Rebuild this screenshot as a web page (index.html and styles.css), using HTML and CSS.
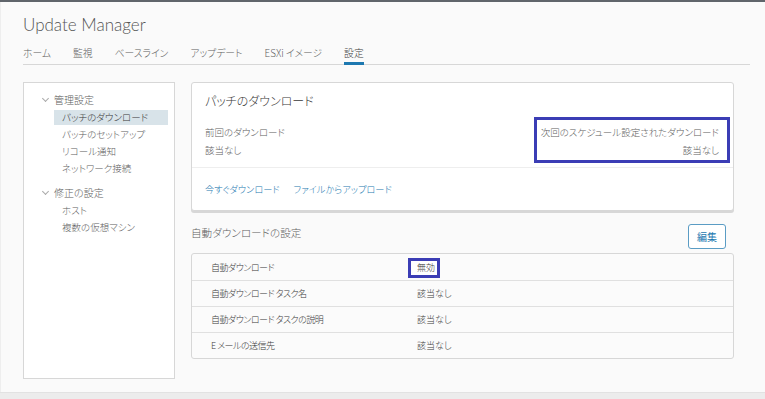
FILE: index.html
```html
<!DOCTYPE html>
<html>
<head>
  <title>Update Manager</title>
  <link rel="stylesheet" href="styles.css">
</head>
<body>
  <div class="topbar"></div>
  <div class="page">
    <h1 class="title">Update Manager</h1>
    <nav class="tabs">
      <a class="tab">ホーム</a>
      <a class="tab">監視</a>
      <a class="tab">ベースライン</a>
      <a class="tab">アップデート</a>
      <a class="tab">ESXi イメージ</a>
      <a class="tab active">設定</a>
    </nav>
    <div class="content">
      <aside class="sidebar">
        <div class="tree-group">
          <div class="tree-head"><span class="chevron"></span>管理設定</div>
          <div class="tree-item selected">パッチのダウンロード</div>
          <div class="tree-item">パッチのセットアップ</div>
          <div class="tree-item">リコール通知</div>
          <div class="tree-item">ネットワーク接続</div>
        </div>
        <div class="tree-group">
          <div class="tree-head"><span class="chevron"></span>修正の設定</div>
          <div class="tree-item">ホスト</div>
          <div class="tree-item">複数の仮想マシン</div>
        </div>
      </aside>
      <main class="main">
        <div class="card">
          <div class="card-block">
            <h2 class="card-title">パッチのダウンロード</h2>
            <div class="details">
              <div class="detail">
                <div>前回のダウンロード</div>
                <div>該当なし</div>
              </div>
              <div class="detail next">
                <div>次回のスケジュール設定されたダウンロード</div>
                <div>該当なし</div>
              </div>
            </div>
          </div>
          <div class="card-footer">
            <a class="link">今すぐダウンロード</a>
            <a class="link">ファイルからアップロード</a>
          </div>
        </div>
        <div class="section-head">
          <h3 class="section-title">自動ダウンロードの設定</h3>
          <button class="btn">編集</button>
        </div>
        <div class="table">
          <div class="row">
            <div class="cell-label">自動ダウンロード</div>
            <div class="cell-value"><span class="marked">無効</span></div>
          </div>
          <div class="row">
            <div class="cell-label">自動ダウンロード タスク名</div>
            <div class="cell-value">該当なし</div>
          </div>
          <div class="row">
            <div class="cell-label">自動ダウンロード タスクの説明</div>
            <div class="cell-value">該当なし</div>
          </div>
          <div class="row">
            <div class="cell-label">E メールの送信先</div>
            <div class="cell-value">該当なし</div>
          </div>
        </div>
      </main>
    </div>
  </div>
  <div class="footer"></div>
</body>
</html>
```

FILE: styles.css
```css
:root {
  --text: #5e5e5e;
  --dark-text: #3a3a3a;
  --blue: #1d78b0;
  --border: #d7d7d7;
  --mark: #3b3db5;
}

* {
  box-sizing: border-box;
}

html, body {
  height: 100%;
}

body {
  margin: 0;
  background: #fafafa;
  color: var(--text);
  font-family: "Noto Sans CJK JP", "Noto Sans", sans-serif;
  font-feature-settings: "palt";
  font-weight: 300;
  font-size: 9.5px;
  line-height: 17px;
  display: flex;
  flex-direction: column;
  overflow: hidden;
}

.topbar {
  height: 2px;
  background: #60656b;
}

.page {
  flex: 1;
  padding: 0 15px 0 22px;
  border-left: 1px solid #eee;
}

.title {
  margin: 0;
  padding-top: 12px;
  font-family: Lato, sans-serif;
  font-weight: 300;
  font-size: 17px;
  line-height: 22px;
  color: #555;
}

.tabs {
  display: flex;
  gap: 22px;
  margin-top: 4px;
  border-bottom: 1px solid var(--border);
}

.tab {
  padding-top: 5px;
  line-height: 17px;
  font-size: 9.8px;
  color: var(--text);
  border-bottom: 3px solid transparent;
  margin-bottom: -1px;
}

.tab.active {
  color: var(--dark-text);
  border-bottom-color: var(--blue);
}

.content {
  display: flex;
  gap: 16px;
  margin-top: 17px;
}

.sidebar {
  width: 152px;
  height: 297px;
  background: #fff;
  border: 1px solid var(--border);
  padding: 8px 6px 0 0;
}

.tree-group + .tree-group {
  margin-top: 8px;
}

.tree-head {
  display: flex;
  align-items: center;
  padding-left: 17px;
  height: 17px;
  font-size: 10px;
}

.chevron {
  width: 5px;
  height: 5px;
  border-right: 1px solid #aaa;
  border-bottom: 1px solid #aaa;
  transform: rotate(45deg);
  margin: -3px 6px 0 2px;
}

.tree-item {
  margin: 2px 0 0 30px;
  padding-left: 8px;
  line-height: 15px;
}

.tree-item.selected {
  background: #d8e3e9;
  color: var(--dark-text);
}

.main {
  flex: 1;
  margin-right: 16px;
}

.card {
  background: #fff;
  border: 1px solid var(--border);
  border-radius: 3px;
  box-shadow: 0 2px 0 0 #d7d7d7;
}

.card-block {
  padding: 9px 14px 8px 13px;
  border-bottom: 1px solid #eee;
}

.card-title {
  margin: 0;
  font-size: 12px;
  font-weight: 300;
  line-height: 18px;
  color: var(--dark-text);
}

.details {
  display: flex;
  justify-content: space-between;
  margin-top: 13px;
  line-height: 18px;
}

.next {
  text-align: right;
  background: #fff;
  border: 3px solid var(--mark);
  padding: 3px 8px 1px 4px;
  margin: -6px -11px -4px -7px;
}

.card-footer {
  display: flex;
  gap: 14px;
  padding: 12px 13px;
  line-height: 18px;
}

.link {
  color: var(--blue);
  font-size: 9.2px;
}

.section-head {
  display: flex;
  justify-content: space-between;
  align-items: flex-start;
  margin-top: 13px;
  padding-right: 8px;
}

.section-title {
  margin: 0;
  font-size: 10.6px;
  font-weight: 300;
  line-height: 18px;
  color: var(--text);
}

.btn {
  width: 38px;
  height: 25px;
  padding: 0;
  background: #fff;
  border: 1px solid #5a9cc4;
  border-radius: 3px;
  color: var(--blue);
  font-family: inherit;
  font-size: 10px;
  font-weight: 400;
}

.table {
  margin-top: 4px;
  border: 1px solid var(--border);
  border-radius: 3px;
  background: #fbfbfb;
  font-size: 9px;
}

.row {
  display: flex;
  align-items: center;
  height: 26px;
  color: var(--dark-text);
}

.row + .row {
  border-top: 1px solid #e0e0e0;
}

.cell-label {
  width: 225px;
  padding-left: 19px;
  letter-spacing: -0.5px;
}

.marked {
  display: inline-block;
  line-height: 14px;
  background: #fff;
  border: 3px solid var(--mark);
  padding: 0 2px 0 6px;
  margin: -3px -5px -3px -9px;
}

.footer {
  height: 7px;
  border-top: 1px solid #e2e2e2;
  background: #ececec;
}
```
